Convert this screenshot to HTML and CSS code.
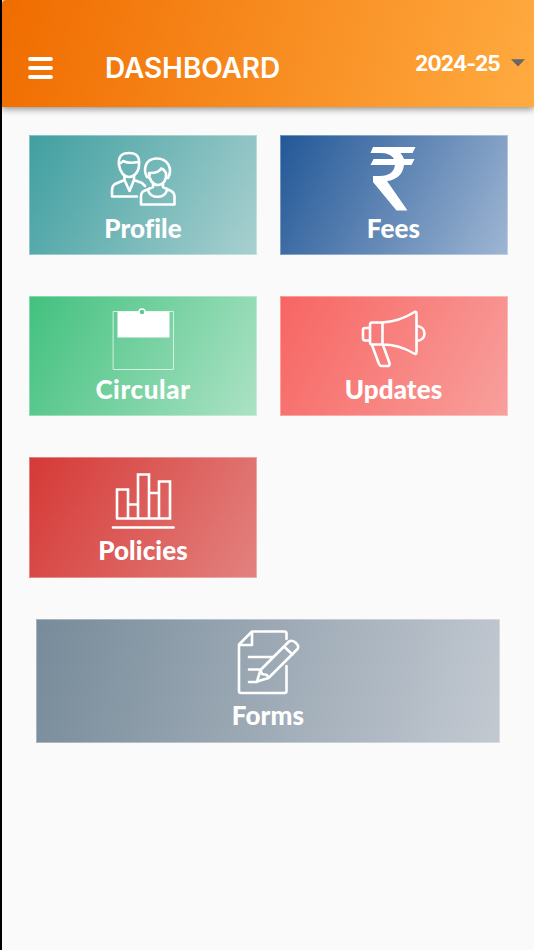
FILE: index.html
```html
<!DOCTYPE html>
<html lang="en">
  <head>
    <meta charset="utf-8">
    <title>Dashboard</title>
    <link rel="stylesheet" href="styles.css">
  </head>
  <body>
    <header class="topbar">
      <svg class="menu" width="25" height="22" viewBox="0 0 25 22">
        <path d="M2 2H23M2 11H23M2 20H23" stroke-width="3.8"/>
      </svg>
      <h1>DASHBOARD</h1>
      <div class="year">
        <span>2024-25</span>
        <svg width="14" height="8" viewBox="0 0 14 8"><path class="arrow" d="M0 0.3H14L7 7.6Z"/></svg>
      </div>
    </header>

    <main class="grid">
      <a class="card profile">
        <svg class="icon" width="110" height="80" viewBox="-2 5 110 80">
          <path d="M29 35C28 26 32 23 39 23S50 26 49 35C49 42 44 47 39 47S30 42 29 35Z"/>
          <path d="M29 34L33 31.5V31C37 33 43 33 48.5 32"/>
          <path d="M34.5 46V50L25 54Q22 56 22 60V66.5H47M34.5 50L39.5 61L44 50V46M44 50L52 53L55 56"/>
          <path d="M57 47C53 40 55 29 66 28.500C78 28 83 39 78 48"/>
          <path d="M59 48L60 43C66 43 70 41 71 38.500Q74 39 76 43C77 50 73 55 68 55S59 50 59 43"/>
          <path d="M63 54V57L54 61Q51 62 51 67V74.500H84.500V66Q84 62 80 60.500L73 57V54M58 60C60 69 75 69 77 60"/>
        </svg>
        <span>Profile</span>
      </a>
      <a class="card fees">
        <svg class="icon" width="110" height="80" viewBox="-1 5 110 80">
          <path class="solid" d="M33 17H75.500L72.500 23H60.500Q63 26 64 29H74.500L71.500 35H64C63 44 57 50 47 51L67.500 80.500H56.500L33 52V46H40C49 46 54 42 55 35H30.500L33.500 29H54C51 24 46 23 39 23H30.500Z"/>
        </svg>
        <span>Fees</span>
      </a>
      <a class="card circular">
        <svg class="icon" width="110" height="80" viewBox="-2 6 110 80">
          <rect class="thin" x="23.500" y="21.500" width="60" height="58"/>
          <path class="solid" d="M27.500 21.500H79.500V47.500H27.500Z"/>
          <circle class="hole" cx="52" cy="22" r="3"/>
        </svg>
        <span>Circular</span>
      </a>
      <a class="card updates">
        <svg class="icon" width="110" height="80" viewBox="-1 6 110 80">
          <path d="M32 32.500H42C53 32 65 28 74.500 22Q76.500 21 76.500 24V62Q76.500 65 74 63.500C65 58 53 54.500 42 54.500H32Q30 54.500 30 52V35Q30 32.500 32 32.500ZM42.500 33V54.500"/>
          <path d="M29 38H25Q23 38 23 40V48Q23 50.500 25 50.500H29M77 36C87 37 87 50 77 51"/>
          <path d="M32 55L39 74Q40 76 42 76H48Q50 75.500 49.500 73L43 55"/>
        </svg>
        <span>Updates</span>
      </a>
      <a class="card policies">
        <svg class="icon" width="110" height="80" viewBox="-2 2 110 80">
          <path class="square" d="M27 63.500V34.500H38V63.500M48 63.500V19.500H59V63.500M69 63.500V26.500H80V63.500ZM27 63.500H80M38 49.500H48M59 38H69"/>
          <path d="M23 72.500H83.500"/>
        </svg>
        <span>Policies</span>
      </a>
      <a class="card forms">
        <svg class="icon" width="110" height="83" viewBox="3 4 110 83">
          <path d="M76.500 24V18.500Q76.500 16.500 74.500 16.500H42L29 29.500V76Q29 78 31 78H74.500Q76.500 78 76.500 76V51M42 17V30H29"/>
          <path d="M39 42H63M39 54.500H50M39 67H47"/>
          <path d="M50.500 55L79 26.500Q82.500 24.500 86 28T87.500 34L58.500 63L47 66.500ZM50.500 55L52 59L57 60L58.500 63M74 31.500L82.500 39.500"/>
        </svg>
        <span>Forms</span>
      </a>
    </main>
  </body>
</html>
```
FILE: styles.css
```css
* {
  box-sizing: border-box;
}
body {
  margin: 0;
  min-height: 950px;
  border-left: 2px solid #000;
  background: #fafafa;
  color: white;
  font-family: Inter, "Liberation Sans", sans-serif;
}
svg {
  display: block;
  fill: none;
  stroke: white;
  stroke-width: 2.6;
  stroke-linecap: round;
  stroke-linejoin: round;
}

.topbar {
  display: flex;
  align-items: center;
  height: 107px;
  padding: 29px 9px 0 26px;
  border-top-left-radius: 4px;
  background: linear-gradient(105deg, #f06c00, #ffab40);
  box-shadow: 0 2px 7px rgba(0, 0, 0, 0.45);
}
.topbar h1 {
  margin: 0 auto 0 52px;
  font-size: 28px;
  font-weight: 600;
  letter-spacing: -0.1px;
}
.year {
  display: flex;
  align-items: center;
  gap: 11px;
  margin-bottom: 10px;
  font-size: 21px;
  font-weight: 700;
  letter-spacing: -0.8px;
}
.year .arrow {
  fill: #666;
  stroke: none;
}

.grid {
  display: grid;
  grid-template-columns: 228px 228px;
  grid-template-rows: 120px 120px 121px 124px;
  gap: 41px 22.500px;
  padding: 28px 0 0 27px;
}
.card {
  display: flex;
  flex-direction: column;
  align-items: center;
  border: 1px solid rgba(255, 255, 255, 0.35);
}
.icon {
  flex: none;
  margin-top: -1px;
}
.card span {
  font-family: Lato, Inter, sans-serif;
  font-size: 26px;
  font-weight: 900;
  line-height: 26px;
  letter-spacing: 0.1px;
}
.profile {
  background: linear-gradient(118deg, #409fa0, #a9d0d0) border-box;
}
.fees {
  background: linear-gradient(118deg, #225797, #9fb6d3) border-box;
}
.circular {
  background: linear-gradient(118deg, #42c17e, #ace2c5) border-box;
}
.circular span {
  letter-spacing: 0.6px;
}
.updates {
  background: linear-gradient(118deg, #f76562, #f8a09d) border-box;
}
.policies {
  background: linear-gradient(118deg, #d53936, #e3827f) border-box;
}
.forms {
  grid-column: 1 / 3;
  width: 464px;
  margin-left: 7px;
  background: linear-gradient(105deg, #778b9a, #c3c9d1) border-box;
}
.solid {
  fill: white;
  stroke: none;
}
.thin {
  stroke: #d2f2e1;
  stroke-width: 1;
}
.hole {
  fill: #62c991;
  stroke-width: 1.5;
}
.square {
  stroke-linejoin: miter;
}
```
